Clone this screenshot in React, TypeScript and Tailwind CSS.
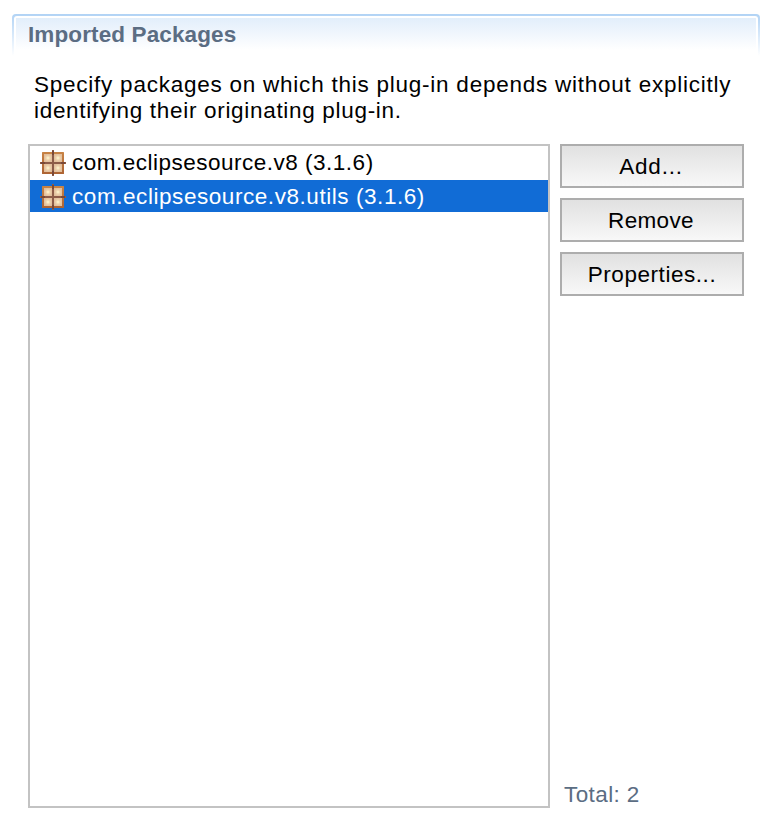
const packages = [
  { name: "com.eclipsesource.v8 (3.1.6)", selected: false },
  { name: "com.eclipsesource.v8.utils (3.1.6)", selected: true },
];

function PackageIcon({ id }: { id: string }) {
  const cell = `cell-${id}`;
  const frame = `frame-${id}`;
  const cells = [
    [4, 4],
    [14, 4],
    [4, 14],
    [14, 14],
  ];
  return (
    <svg width="26" height="26" viewBox="0 0 26 26" className="block shrink-0">
      <defs>
        <radialGradient id={cell}>
          <stop offset="0.15" stopColor="#fbefc6" />
          <stop offset="0.5" stopColor="#eed2ad" />
          <stop offset="1" stopColor="#e2bf9c" />
        </radialGradient>
        <linearGradient id={frame} x1="0" y1="0" x2="0" y2="1">
          <stop offset="0" stopColor="#c88345" />
          <stop offset="1" stopColor="#ad6333" />
        </linearGradient>
      </defs>
      <rect x="2" y="2" width="22" height="22" rx="0.5" fill={`url(#${frame})`} />
      <rect x="4" y="4" width="18" height="18" fill="#d5aa86" />
      {cells.map(([x, y]) => (
        <rect key={`${x}-${y}`} x={x} y={y} width="8" height="8" fill={`url(#${cell})`} />
      ))}
      <path d="M12 0h2v26h-2zM0 12h26v2H0z" fill="#8d5c48" />
      <path d="M12 1h2v4h-2zM12 21h2v4h-2zM1 12h4v2H1zM21 12h4v2h-4z" fill="#794938" />
    </svg>
  );
}

function ActionButton({ label, tracking }: { label: string; tracking: string }) {
  return (
    <button
      className={`flex h-11 items-center justify-center border-2 border-[#adadad] bg-linear-to-b from-[#e1e1e1] to-[#f8f8f8] leading-[26px] text-black ${tracking}`}
    >
      {label}
    </button>
  );
}

export default function App() {
  return (
    <main className="h-[834px] w-[768px] overflow-hidden bg-white px-3 pt-3.5 font-['Liberation_Sans',Arial,sans-serif] text-[22.5px] text-black">
      <header className="h-[42px] w-[748px] rounded-t-[4px] bg-linear-to-b from-[#b1d3f5] to-white px-0.5 pt-0.5">
        <div className="h-10 rounded-t-[3px] bg-white px-0.5 pt-0.5">
          <h1 className="h-8 bg-linear-to-b from-[#e2eefb] to-white pl-3 text-[22.5px] leading-[33px] font-bold tracking-[0.12px] text-[#5b6d83]">
            Imported Packages
          </h1>
        </div>
      </header>
      <p className="mt-4 ml-[22px] leading-[26px] whitespace-nowrap">
        <span className="block tracking-[0.76px]">Specify packages on which this plug-in depends without explicitly</span>
        <span className="block tracking-[0.69px]">identifying their originating plug-in.</span>
      </p>
      <section className="mt-5 ml-4 flex gap-2.5">
        <ul className="h-[664px] w-[522px] border-2 border-[#c3c3c3] bg-white">
          {packages.map((p) => (
            <li
              key={p.name}
              className={
                p.selected
                  ? "flex h-8 items-center gap-1.5 bg-[#116cd6] pt-0.5 pl-2.5 tracking-[0.56px] text-white"
                  : "flex h-[34px] items-center gap-1.5 pl-2.5 tracking-[0.5px]"
              }
            >
              <PackageIcon id={p.selected ? "utils" : "core"} />
              <span className="leading-[26px] whitespace-nowrap">{p.name}</span>
            </li>
          ))}
        </ul>
        <div className="flex h-[664px] w-[184px] flex-col gap-2.5">
          <ActionButton label="Add..." tracking="pt-0.5 pr-0.5 tracking-[0.8px]" />
          <ActionButton label="Remove" tracking="pt-0.5 pr-0.5 tracking-[0.35px]" />
          <ActionButton label="Properties..." tracking="pt-0.5 tracking-[0.55px]" />
          <span className="mt-auto pl-1 leading-[26px] tracking-[0.4px] text-[#5b6d83]">Total: 2</span>
        </div>
      </section>
    </main>
  );
}
